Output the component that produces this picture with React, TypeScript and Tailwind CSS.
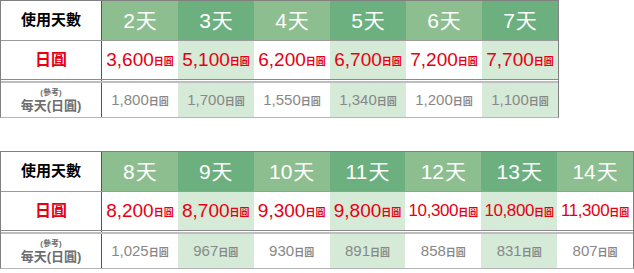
const FONT = { fontFamily: '"Liberation Sans", Arial, "Noto Sans CJK TC", sans-serif' };

type Col = { day: string; price: string; perDay: string };

const week1: Col[] = [
  { day: '2', price: '3,600', perDay: '1,800' },
  { day: '3', price: '5,100', perDay: '1,700' },
  { day: '4', price: '6,200', perDay: '1,550' },
  { day: '5', price: '6,700', perDay: '1,340' },
  { day: '6', price: '7,200', perDay: '1,200' },
  { day: '7', price: '7,700', perDay: '1,100' },
];

const week2: Col[] = [
  { day: '8', price: '8,200', perDay: '1,025' },
  { day: '9', price: '8,700', perDay: '967' },
  { day: '10', price: '9,300', perDay: '930' },
  { day: '11', price: '9,800', perDay: '891' },
  { day: '12', price: '10,300', perDay: '858' },
  { day: '13', price: '10,800', perDay: '831' },
  { day: '14', price: '11,300', perDay: '807' },
];

function PriceTable({ cols, width, grid }: { cols: Col[]; width: string; grid: string }) {
  return (
    <div className={`${width} border border-[#808080] border-b-[#b5b5b5]`}>
      {/* header */}
      <div className={`grid ${grid} h-[40px] border-b border-[#9a9a9a]`}>
        <div className="flex items-center justify-center border-r border-[#555] text-[15px] font-bold text-black">使用天數</div>
        {cols.map((c, i) => (
          <div
            key={c.day}
            className={`flex items-center justify-center text-[21px] text-white ${i % 2 === 0 ? 'bg-[#8cbe8f]' : 'bg-[#6bb07e]'}`}
          >
            {c.day}
            <span className="ml-[1px]">天</span>
          </div>
        ))}
      </div>

      {/* price */}
      <div className={`grid ${grid} h-[39px] border-b border-[#8a8a8a]`}>
        <div className="flex items-center justify-center border-r border-[#555] text-[16px] font-bold text-[#e60012]">日圓</div>
        {cols.map((c, i) => (
          <div
            key={c.day}
            className={`flex items-center justify-center text-[#e60012] ${i % 2 === 0 ? 'bg-white' : 'bg-[#d5ebd7]'}`}
          >
            <span className={c.price.length > 5 ? 'text-[17px] tracking-[-0.4px]' : 'text-[19px]'}>{c.price}</span>
            <span className="text-[10px] font-bold mt-[3px]">日圓</span>
          </div>
        ))}
      </div>

      {/* double rule */}
      <div className={`grid ${grid} h-[3px] border-b-2 border-[#bdbdbd]`}>
        <div className="border-r border-[#555]" />
      </div>

      {/* per day */}
      <div className={`grid ${grid} h-[34px]`}>
        <div className="flex flex-col items-center justify-center border-r border-[#555] text-[#6e6e6e] font-bold leading-none">
          <span className="text-[8px] mb-[2px]">(參考)</span>
          <span className="text-[13px]">每天(日圓)</span>
        </div>
        {cols.map((c, i) => (
          <div
            key={c.day}
            className={`flex items-center justify-center text-[#888] ${i % 2 === 0 ? 'bg-white' : 'bg-[#d5ebd7]'}`}
          >
            <span className="text-[15px]">{c.perDay}</span>
            <span className="text-[10px] font-bold mt-[2px]">日圓</span>
          </div>
        ))}
      </div>
    </div>
  );
}

export default function App() {
  return (
    <div className="w-[634px] h-[273px] bg-white overflow-hidden" style={FONT}>
      <PriceTable cols={week1} width="w-[559px]" grid="grid-cols-[101px_repeat(6,1fr)]" />
      <div className="h-[33px]" />
      <PriceTable cols={week2} width="w-[634px]" grid="grid-cols-[101px_repeat(7,1fr)]" />
    </div>
  );
}
